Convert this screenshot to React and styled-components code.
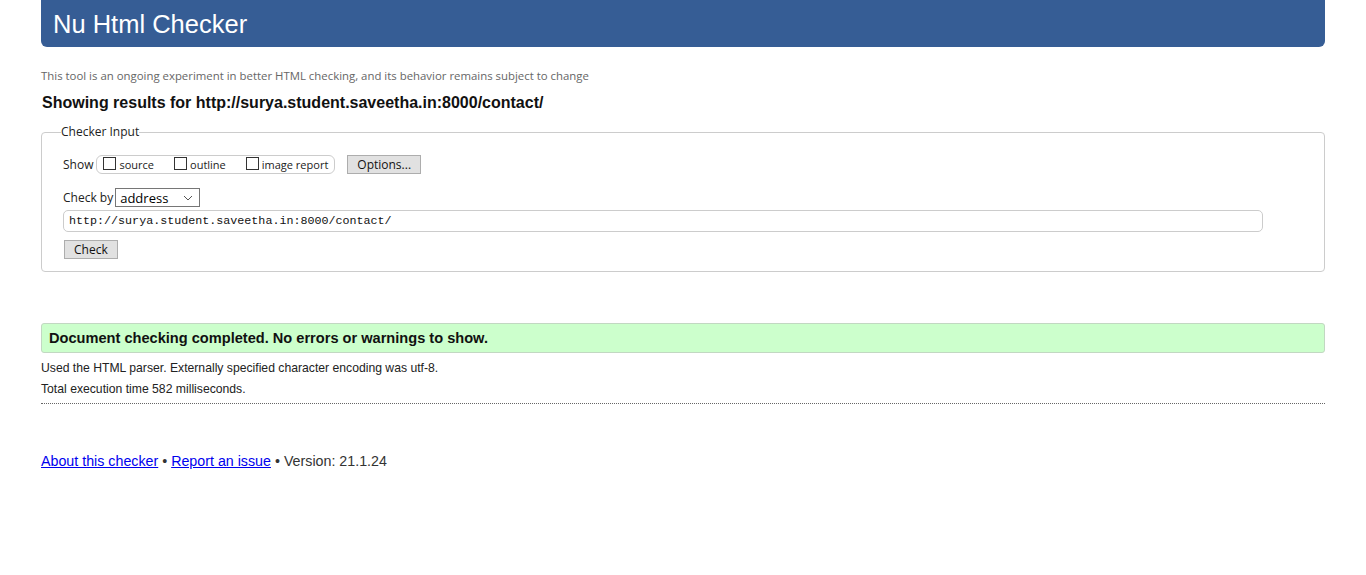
import styled, { createGlobalStyle } from "styled-components"

const GlobalStyle = createGlobalStyle`
    body {
        margin: 0;
        background: #fff;
        font-family: "Liberation Sans", Arial, sans-serif;
        color: #222;
    }
`

const Page = styled.div`
    padding: 0 41px;
`

const Header = styled.h1`
    margin: 0;
    height: 47px;
    background: #365d95;
    border-radius: 0 0 6px 6px;
    color: #fff;
    font-family: "Liberation Sans", Arial, sans-serif;
    font-weight: 400;
    font-size: 25.5px;
    line-height: 48px;
    padding-left: 12px;
`

const Notice = styled.p`
    margin: 21px 0 0;
    font-family: "Open Sans", sans-serif;
    font-size: 11.4px;
    color: #666;
    line-height: 15px;
`

const Heading = styled.h2`
    margin: 10px 0 0 1px;
    font-size: 16px;
    font-weight: 700;
    color: #111;
    line-height: 20px;
`

const Fieldset = styled.fieldset`
    margin: 12px 0 0;
    padding: 12px 21px 12px;
    border: 1px solid #ccc;
    border-radius: 4px;
    font-family: "Open Sans", sans-serif;
    font-size: 12px;
    color: #222;
`

const Legend = styled.legend`
    padding: 0;
    margin-left: -2px;
    font-size: 12px;
    line-height: 14px;
`

const Row = styled.div`
    display: flex;
    align-items: center;
    margin-top: ${({ $top }) => $top || 0}px;
`

const Label = styled.span`
    font-size: 12px;
`

const Group = styled.div`
    display: flex;
    align-items: center;
    height: 17px;
    margin-left: 3px;
    padding: 0 6px 0 6px;
    border: 1px solid #ccc;
    border-radius: 6px;
    gap: 20px;
`

const Option = styled.label`
    display: flex;
    align-items: center;
    gap: 3px;
    font-size: 11px;
`

const Box = styled.span`
    width: 11px;
    height: 11px;
    border: 1px solid #333;
    background: #fff;
    display: inline-block;
    margin-top: -3px;
`

const Button = styled.button`
    font-family: "Open Sans", sans-serif;
    font-size: 12px;
    color: #111;
    background: #e1e1e1;
    border: 1px solid #adadad;
    height: 19px;
    margin-left: ${({ $left }) => $left || 0}px;
    padding: 0 ${({ $pad }) => $pad || 9}px;
    line-height: 1;
    border-radius: 0;
`

const Select = styled.div`
    display: flex;
    align-items: center;
    justify-content: space-between;
    width: 85px;
    height: 19px;
    margin-left: 2px;
    padding: 0 6px 0 4px;
    box-sizing: border-box;
    border: 1px solid #767676;
    font-size: 13px;
    color: #000;
`

const UrlField = styled.div`
    margin-top: 3px;
    margin-right: 40px;
    height: 20px;
    border: 1px solid #ccc;
    border-radius: 5px;
    padding-left: 5px;
    display: flex;
    align-items: center;
    font-family: "Liberation Mono", "DejaVu Sans Mono", monospace;
    font-size: 11.7px;
    color: #111;
`

const Success = styled.div`
    margin-top: 51px;
    height: 28px;
    background: #ccffcc;
    border: 1px solid #c2d8c2;
    border-radius: 3px;
    padding-left: 7px;
    display: flex;
    align-items: center;
    font-size: 14.6px;
    font-weight: 700;
    color: #111;
`

const Details = styled.div`
    margin-top: 5px;
    padding-bottom: 3px;
    border-bottom: 1px dotted #666;
    font-size: 12.2px;
    line-height: 21px;
    color: #222;
`

const Footer = styled.p`
    margin: 49px 0 0;
    font-size: 14.25px;
    color: #333;
`

const Link = styled.a`
    color: #0000ee;
`

const Chevron = () => (
    <svg width="10" height="6" viewBox="0 0 10 6">
        <path d="M1 1l4 4 4-4" fill="none" stroke="#555" strokeWidth="1" />
    </svg>
)

const options = ["source", "outline", "image report"]

const App = () => {
    return (
        <>
            <GlobalStyle />
            <Page>
                <Header>Nu Html Checker</Header>
                <Notice>This tool is an ongoing experiment in better HTML checking, and its behavior remains subject to change</Notice>
                <Heading>Showing results for http://surya.student.saveetha.in:8000/contact/</Heading>

                <Fieldset>
                    <Legend>Checker Input</Legend>
                    <Row $top={4}>
                        <Label>Show</Label>
                        <Group>
                            {options.map((o) => (
                                <Option key={o}>
                                    <Box />
                                    {o}
                                </Option>
                            ))}
                        </Group>
                        <Button $left={12}>Options...</Button>
                    </Row>
                    <Row $top={14}>
                        <Label>Check by</Label>
                        <Select>
                            address
                            <Chevron />
                        </Select>
                    </Row>
                    <UrlField>http://surya.student.saveetha.in:8000/contact/</UrlField>
                    <Row $top={8}>
                        <Button $left={1}>Check</Button>
                    </Row>
                </Fieldset>

                <Success>Document checking completed. No errors or warnings to show.</Success>
                <Details>
                    <div>Used the HTML parser. Externally specified character encoding was utf-8.</div>
                    <div>Total execution time 582 milliseconds.</div>
                </Details>

                <Footer>
                    <Link href="#">About this checker</Link> • <Link href="#">Report an issue</Link> • Version: 21.1.24
                </Footer>
            </Page>
        </>
    )
}

export default App
